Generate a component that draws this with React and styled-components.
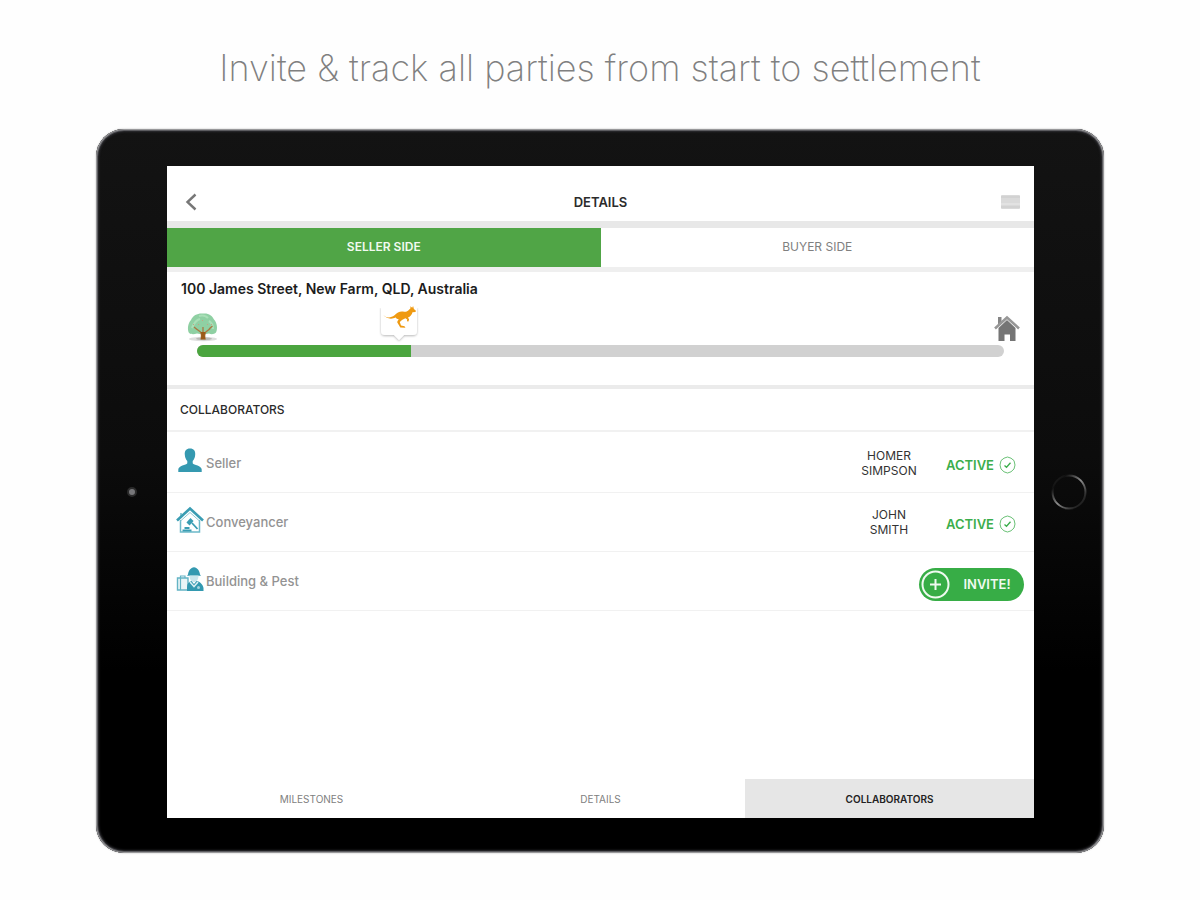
import React from "react";
import styled, { createGlobalStyle } from "styled-components";

const GlobalStyle = createGlobalStyle`
  *, *::before, *::after { box-sizing: border-box; }
  body {
    margin: 0;
    background: #fefefe;
    color: #2b2b2b;
    font-family: Inter, Roboto, "Liberation Sans", sans-serif;
  }
  button { font: inherit; border: 0; padding: 0; background: none; cursor: pointer; }
  svg { display: block; }
`;

const Page = styled.main`
  min-height: 100vh;
  display: flex;
  flex-direction: column;
  align-items: center;
  padding-bottom: 47px;
`;

const Headline = styled.h1`
  margin: 0;
  padding: 44px 16px 37px;
  font-family: Inter, "Liberation Sans", sans-serif;
  font-size: 36px;
  line-height: 48px;
  font-weight: 200;
  color: #808080;
  text-align: center;
`;

const Tablet = styled.div`
  flex: 1;
  width: 84%;
  display: grid;
  grid-template-columns: 71px minmax(0, 1fr) 70px;
  padding: 37px 0 35px;
  border-radius: 28px;
  background: linear-gradient(#131313 0%, #0c0c0c 45%, #000 75%);
  box-shadow: inset 0 0 0 1px #98989a, inset 0 0 0 2px #5c5c60, inset 0 0 2px 3px #2c2c30, 0 0 2px #b8b8b8;
`;

const Bezel = styled.div`
  display: flex;
  align-items: center;
  justify-content: center;
`;

const Camera = styled.span`
  width: 10px;
  height: 10px;
  border-radius: 50%;
  border: 2px solid #2b2b2b;
  background: #77777a;
`;

const HomeButton = styled.button`
  width: 36px;
  height: 36px;
`;

const Screen = styled.div`
  display: flex;
  flex-direction: column;
  background: #fff;
`;

const NavBar = styled.header`
  display: grid;
  grid-template-columns: 48px 1fr 48px;
  align-items: center;
  height: 62px;
  padding-top: 16px;
  border-bottom: 7px solid #e8e8e8;
`;

const NavTitle = styled.h2`
  margin: 0;
  font-size: 13px;
  line-height: 16px;
  font-weight: 600;
  text-align: center;
`;

const NavButton = styled.button`
  display: flex;
  align-items: center;
  justify-content: ${(p) => (p.$end ? "flex-end" : "flex-start")};
  height: 24px;
  padding: ${(p) => (p.$end ? "0 14px 0 0" : "0 0 0 18px")};
`;

const SideTabs = styled.nav`
  display: flex;
  height: 44px;
  border-bottom: 5px solid #efefef;
`;

const SideTab = styled.button`
  flex: 1;
  padding-bottom: 2px;
  font-size: 12px;
  line-height: 16px;
  font-weight: ${(p) => (p.$active ? 600 : 400)};
  color: ${(p) => (p.$active ? "#f2faf1" : "#808080")};
  background: ${(p) => (p.$active ? "#50a546" : "transparent")};
`;

const Journey = styled.section`
  padding: 7px 14px 28px;
  border-bottom: 4px solid #ebebeb;
`;

const Address = styled.h3`
  margin: 0;
  font-size: 14px;
  line-height: 20px;
  font-weight: 600;
  color: #1c1c1c;
`;

const Route = styled.div`
  position: relative;
  display: flex;
  justify-content: space-between;
  align-items: flex-end;
  height: 46px;
  padding: 0 0 3px 6px;
`;

const Marker = styled.div`
  position: absolute;
  left: 26%;
  bottom: 2px;
  transform: translateX(-50%);
`;

const Track = styled.div`
  height: 12px;
  margin: 0 16px;
  border-radius: 6px;
  overflow: hidden;
  background: #d1d1d1;
`;

const TrackFill = styled.div`
  height: 100%;
  background: #4ba53f;
`;

const SectionTitle = styled.h3`
  margin: 0;
  padding: 13px 13px 12px;
  border-bottom: 2px solid #f1f1f1;
  font-size: 12px;
  line-height: 16px;
  font-weight: 500;
`;

const People = styled.ul`
  margin: 0;
  padding: 2px 0 0;
  list-style: none;
  flex: 1;
`;

const Person = styled.li`
  display: flex;
  align-items: center;
  height: 59px;
  padding: 0 10px 0 9px;
  border-bottom: 1px solid #f1f1f1;
`;

const Role = styled.span`
  flex: 1;
  padding-left: 2px;
  font-size: 13px;
  line-height: 16px;
  font-weight: 500;
  color: #939393;
`;

const PersonName = styled.span`
  width: 72px;
  font-size: 12px;
  line-height: 15px;
  color: #333;
  text-align: center;
`;

const Status = styled.span`
  display: flex;
  align-items: center;
  justify-content: flex-end;
  gap: 5px;
  width: 99px;
  padding: 3px 8px 0 0;
  font-size: 13px;
  line-height: 18px;
  font-weight: 600;
  color: #3bae4b;
`;

const InviteButton = styled.button`
  display: flex;
  align-items: center;
  width: 105px;
  height: 33px;
  margin-top: 6px;
  padding-left: 2px;
  border-radius: 17px;
  background: #37ad46;
  color: #effaf0;
  font-size: 13px;
  line-height: 16px;
  font-weight: 600;
`;

const InviteLabel = styled.span`
  flex: 1;
  text-align: center;
`;

const BottomTabs = styled.nav`
  display: flex;
  height: 39px;
`;

const BottomTab = styled.button`
  flex: 1;
  font-size: 10px;
  line-height: 12px;
  font-weight: ${(p) => (p.$active ? 600 : 400)};
  color: ${(p) => (p.$active ? "#222" : "#808080")};
  background: ${(p) => (p.$active ? "#e6e6e6" : "transparent")};
`;

const BackIcon = () => (
  <svg width="12" height="18" viewBox="0 0 12 18" fill="none" stroke="#777" strokeWidth="2.4" aria-hidden="true">
    <path d="M10.5 1.5 2.5 9l8 7.5" />
  </svg>
);

const MenuIcon = () => (
  <svg width="19" height="14" viewBox="0 0 19 14" aria-hidden="true">
    <rect width="19" height="14" rx="1" fill="#dadada" />
    <path d="M0 9h19" stroke="#e6e6e6" strokeWidth="1.4" />
    <path d="M0 2h19M0 12h19" stroke="#d2d2d2" strokeWidth="2" />
  </svg>
);

const HomeRing = () => (
  <svg width="36" height="36" viewBox="0 0 36 36" fill="none" strokeWidth="2" aria-hidden="true">
    <defs>
      <linearGradient id="ring" x1="0" y1="0" x2="1" y2="1">
        <stop offset="0" stopColor="#2a2a2a" />
        <stop offset="0.2" stopColor="#111" />
        <stop offset="0.5" stopColor="#8d8d8d" />
        <stop offset="0.8" stopColor="#2a2a2a" />
        <stop offset="1" stopColor="#0c0c0c" />
      </linearGradient>
    </defs>
    <circle cx="18" cy="18" r="16.5" stroke="url(#ring)" />
  </svg>
);

const TreeIcon = () => (
  <svg width="32" height="30" viewBox="0 0 32 30" aria-hidden="true">
    <ellipse cx="16" cy="27" rx="14" ry="2.2" fill="#dedede" />
    <ellipse cx="17" cy="26.8" rx="8" ry="1.5" fill="#b9b9b5" />
    <path d="M2 21C0 17 1 11 4 8 6 3 11 1 16 1.500c6-.5 9 2 11 6 3 3 4 9 2 13-2 2-5 2-7 1-4 1-8 1-12 0-3 1-6 1-8-.5Z" fill="#8fd0a3" />
    <path d="M5 16c2-5 4-8 8-9M12 4c3-1 7 0 9 2M22 9c3 2 4 5 4 8" fill="none" stroke="#a9dfb7" strokeWidth="2.200" />
    <path d="M14.300 27c.6-3 .4-5-.8-7l-4-3M17.800 27c-.6-3-.2-5 1-7l4.500-3.500M16 20v-5M10 17.500 7 15m15 2 3.500-3" fill="none" stroke="#a97842" strokeWidth="1.300" />
    <path d="M13.500 27.500c1-2 1-5 .3-7.500h4.600c-.9 2.500-.7 5.500.4 7.500Z" fill="#9b5a18" />
    <path d="m6 13 1-1m4 1 1-1m8 1 1-1m3 0 1 1m-10-4 1-1" stroke="#c6a182" />
  </svg>
);

const KangarooMarker = () => (
  <svg width="42" height="40" viewBox="0 0 42 40" role="img" aria-label="Current progress">
    <defs>
      <filter id="soft" x="-20%" y="-20%" width="140%" height="140%">
        <feDropShadow dx="0" dy="1" stdDeviation="1" floodColor="#000" floodOpacity="0.28" />
      </filter>
    </defs>
    <path d="M3 4v24q0 4 4 4h9l5 5 5-5h9q4 0 4-4V4Z" fill="#fff" filter="url(#soft)" />
    <path d="M1 0h40v5H1Z" fill="#fff" />
    <path
      d="M5 11.500c3 3.600 7.500 3.800 11.500.8 2.500-2.800 5.500-4.300 8.500-3.800 2.200.5 4.300.4 5.800-1.500l1.700-1.800-.2-1.900 1.900 1.500.9-1.800.8 3 2 1.700-.4 1.200-3 .3c-.6 2.700-2.300 4.300-4.500 5.400l1.100 2-.7 2-1.500-.4.3-1.700-1.800-1.200-3.400 1.600-2.200 2.200 1.200 3.400 3.500.7 1 1.500-5.200-.1-3-5.200c-.2-1.200.5-2.100 1.500-3-1.600-.3-2.500-1-3-1.900-4.700 2.200-9.800 1.200-12.800-3Z"
      fill="#ef9a12"
    />
  </svg>
);

const HouseIcon = () => (
  <svg width="26" height="27" viewBox="0 0 26 27" aria-hidden="true">
    <path d="M4.500 13 13 5l8.500 8v13H16v-6.500h-5.500V26h-6Z" fill="#757575" />
    <path d="M4 2h3.500v6L4 11Z" fill="#858585" />
    <path d="m1 13.500 12-11 12 11" fill="none" stroke="#979797" strokeWidth="2.600" />
  </svg>
);

const SellerIcon = () => (
  <svg width="28" height="32" viewBox="0 0 28 32" aria-hidden="true">
    <path d="M14 1.500c3.800 0 5.600 2.500 5.200 6.200-.2 3.200-1.400 5-2.500 6.200v2.300c1 1.900 9 2.300 9 6.300V25H2.300v-2.500c0-4 8-4.400 9-6.300v-2.300C10.200 12.700 9 10.900 8.800 7.700 8.400 4 10.200 1.500 14 1.500Z" fill="#3599b0" />
  </svg>
);

const ConveyancerIcon = () => (
  <svg width="28" height="32" viewBox="0 0 28 32" fill="none" stroke="#3a9db3" aria-hidden="true">
    <path d="M4.500 14v12h19V14" strokeWidth="1.500" stroke="#6cb9c9" />
    <path d="M5 7v5" strokeWidth="2" stroke="#8ccad6" />
    <path d="M1 14.500 14 2.500l13 12" strokeWidth="2.600" />
    <path d="M4.500 15 14 6.500l9.500 8.500" stroke="#8ccad6" />
    <path d="m12 18 4-4.500" strokeWidth="4.200" />
    <path d="m16 17 5.500 6" strokeWidth="1.800" />
    <path d="M6.500 24.500h9M8.500 22h5" strokeWidth="1.800" />
  </svg>
);

const BuildingIcon = () => (
  <svg width="28" height="32" viewBox="0 0 28 32" aria-hidden="true">
    <path d="M1.500 13H12v12H1.500Z" fill="#e9f5f7" stroke="#64b4c5" strokeWidth="1.400" />
    <path d="M4.500 13v-2H9v2M4.500 13v12" fill="none" stroke="#64b4c5" strokeWidth="1.200" />
    <path d="M12 9.500c.5-4 2.700-6.800 6-7.300 3.300.5 5.500 3.300 6 7.300l1 1.200H11Z" fill="#3399b0" />
    <path d="M13.500 10.500h9c0 4-1.700 6.500-4.500 6.500s-4.500-2.500-4.500-6.500Z" fill="#c9e6ec" />
    <path d="M11 26v-4c0-3.500 2-5.500 4.500-6l2.500 3 2.500-3c3.500.5 6.500 3.500 7 7v3Z" fill="#3399b0" />
    <path d="m14 17 4 4.500 4-4.500" fill="none" stroke="#d8eef2" strokeWidth="1.500" />
    <circle cx="22.500" cy="22.500" r="1.500" fill="#a4d4de" />
  </svg>
);

const CheckBadge = () => (
  <svg width="17" height="18" viewBox="0 0 17 18" fill="none" stroke="#3bae4b" aria-hidden="true">
    <path d="M8.500 1 12 2.200l3 2.400 1 4.400-1 4-3 2.800-3.500 1.200L5 15.800 2 13 1 9l1-4.400 3-2.400Z" strokeWidth="0.900" opacity="0.850" />
    <path d="m5.500 9.500 2 1.800 4-4.500" strokeWidth="1.300" />
  </svg>
);

const PlusRing = () => (
  <svg width="29" height="29" viewBox="0 0 29 29" fill="none" stroke="#effaf0" aria-hidden="true">
    <circle cx="14.500" cy="14.500" r="13" strokeWidth="2" />
    <path d="M14.500 9v11M9 14.500h11" strokeWidth="2" />
  </svg>
);

const people = [
  { role: "Seller", icon: SellerIcon, name: ["HOMER", "SIMPSON"] },
  { role: "Conveyancer", icon: ConveyancerIcon, name: ["JOHN", "SMITH"] },
  { role: "Building & Pest", icon: BuildingIcon },
];

function PersonRow({ role, icon: Icon, name }) {
  return (
    <Person>
      <Icon />
      <Role>{role}</Role>
      {name ? (
        <>
          <PersonName>
            {name[0]}
            <br />
            {name[1]}
          </PersonName>
          <Status>
            ACTIVE
            <CheckBadge />
          </Status>
        </>
      ) : (
        <InviteButton type="button">
          <PlusRing />
          <InviteLabel>INVITE!</InviteLabel>
        </InviteButton>
      )}
    </Person>
  );
}

export default function App() {
  return (
    <Page>
      <GlobalStyle />
      <Headline>Invite &amp; track all parties from start to settlement</Headline>
      <Tablet>
        <Bezel>
          <Camera />
        </Bezel>
        <Screen>
          <NavBar>
            <NavButton type="button" aria-label="Back">
              <BackIcon />
            </NavButton>
            <NavTitle>DETAILS</NavTitle>
            <NavButton type="button" aria-label="Menu" $end>
              <MenuIcon />
            </NavButton>
          </NavBar>
          <SideTabs>
            <SideTab type="button" $active>SELLER SIDE</SideTab>
            <SideTab type="button">BUYER SIDE</SideTab>
          </SideTabs>
          <Journey>
            <Address>100 James Street, New Farm, QLD, Australia</Address>
            <Route>
              <TreeIcon />
              <Marker>
                <KangarooMarker />
              </Marker>
              <HouseIcon />
            </Route>
            <Track>
              <TrackFill style={{ width: "26.5%" }} />
            </Track>
          </Journey>
          <SectionTitle>COLLABORATORS</SectionTitle>
          <People>
            {people.map((person) => (
              <PersonRow key={person.role} {...person} />
            ))}
          </People>
          <BottomTabs>
            <BottomTab type="button">MILESTONES</BottomTab>
            <BottomTab type="button">DETAILS</BottomTab>
            <BottomTab type="button" $active>COLLABORATORS</BottomTab>
          </BottomTabs>
        </Screen>
        <Bezel>
          <HomeButton type="button" aria-label="Home">
            <HomeRing />
          </HomeButton>
        </Bezel>
      </Tablet>
    </Page>
  );
}
